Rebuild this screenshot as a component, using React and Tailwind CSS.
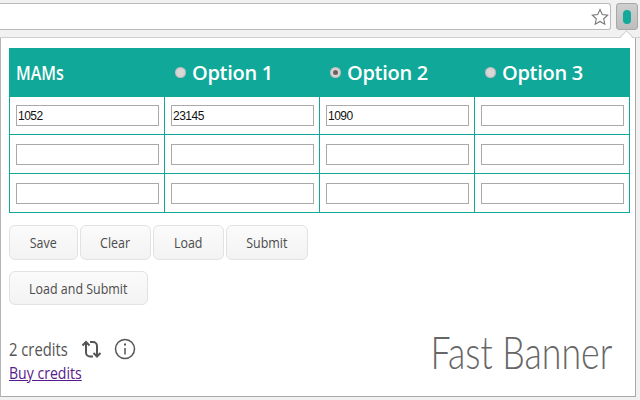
import React from 'react';

const rows = [
    ['1052', '23145', '1090', ''],
    ['', '', '', ''],
    ['', '', '', ''],
];

const headers = [
    { label: 'Option 1', checked: false },
    { label: 'Option 2', checked: true },
    { label: 'Option 3', checked: false },
];

const Radio = ({ checked }) => (
    <span className="flex h-[11px] w-[11px] shrink-0 items-center justify-center rounded-full bg-[#d8d8d8] shadow-[inset_0_0_2px_#8a8a8a]">
        {checked && <span className="h-[5px] w-[5px] rounded-full bg-[#6f5f62]" />}
    </span>
);

const Btn = ({ className, children }) => (
    <button className={`rounded-[6px] border border-[#e2e2e2] bg-gradient-to-b from-[#fbfbfb] to-[#f3f3f3] text-[15px] text-[#4c4c4c] ${className}`}>
        <span className="inline-block scale-x-[.83] whitespace-nowrap">{children}</span>
    </button>
);

const App = () => {
    return (
        <div className="relative h-[400px] w-[640px] overflow-hidden bg-[#f1f1f1] font-['Open_Sans',sans-serif]">
            {/* Browser toolbar */}
            <div className="flex h-[38px] items-start border-b border-[#cfcfcf] pt-[3px]">
                <div className="flex h-[27px] w-[611px] items-center justify-end rounded-r-[3px] border-y border-r border-[#b9b9b9] bg-white pr-[1px]">
                    <svg width="18" height="18" viewBox="0 0 18 18" fill="#fff" stroke="#777" strokeWidth="1.1">
                        <path d="M9 1.5l2.3 5 5.4.6-4 3.7 1.1 5.4L9 13.5l-4.800 2.700 1.100-5.400-4-3.700 5.400-.6z" />
                    </svg>
                </div>
                <div className="ml-[5px] flex h-[27px] w-[22px] items-center justify-center rounded-[3px] border border-[#a8a8a8] bg-gradient-to-b from-[#cfcfcf] to-[#bdbdbd]">
                    <span className="h-[14px] w-[8px] rounded-full bg-[#13a99b]" />
                </div>
            </div>
            <span className="absolute left-[622px] top-[32px] h-[9px] w-[9px] rotate-45 border-l border-t border-[#cfcfcf] bg-white" />

            {/* Popup */}
            <div className="relative ml-px h-[359px] w-[635px] border-b border-r border-[#a9a9a9] bg-white px-[8px] pt-[10px] shadow-[-1px_0_0_#b5b5b5]">
                <div className="w-[621px]">
                    <div className="grid h-[49px] grid-cols-[155px_155px_155px_156px] items-center bg-[#10a899] text-[20px] font-semibold text-white">
                        <div className="pl-[7px]">
                            <span className="inline-block origin-left scale-x-[.8]">MAMs</span>
                        </div>
                        {headers.map((h) => (
                            <div key={h.label} className="flex items-center gap-[6px] pl-[11px] tracking-[-0.3px]">
                                <Radio checked={h.checked} />
                                {h.label}
                            </div>
                        ))}
                    </div>
                    <div className="border-x border-b border-[#10a899]">
                        {rows.map((row, i) => (
                            <div key={i} className={`grid grid-cols-[155px_155px_155px_154px] ${i > 0 ? 'h-[39px] border-t border-[#10a899]' : 'h-[37px]'}`}>
                                {row.map((val, j) => (
                                    <div key={j} className={`flex items-center pl-[6px] ${j < 3 ? 'border-r border-[#10a899]' : ''}`}>
                                        <input
                                            readOnly
                                            value={val}
                                            className="h-[21px] w-[143px] border border-[#aaa] bg-white px-[1px] font-['Liberation_Sans',sans-serif] text-[12px] tracking-[-0.5px] text-[#111] outline-none"
                                        />
                                    </div>
                                ))}
                            </div>
                        ))}
                    </div>
                </div>

                <div className="mt-[12px] flex gap-[2px]">
                    <Btn className="h-[35px] w-[69px]">Save</Btn>
                    <Btn className="h-[35px] w-[71px]">Clear</Btn>
                    <Btn className="h-[35px] w-[71px]">Load</Btn>
                    <Btn className="h-[35px] w-[82px]">Submit</Btn>
                </div>
                <div className="mt-[11px]">
                    <Btn className="h-[34px] w-[139px]">Load and Submit</Btn>
                </div>

                <div className="mt-[30px] flex items-start justify-between">
                    <div>
                        <div className="flex h-[28px] items-center text-[18px] text-[#555]">
                            <span className="inline-block w-[59px] origin-left scale-x-[.82] whitespace-nowrap">2 credits</span>
                            <svg className="ml-[12px]" width="22" height="22" viewBox="0 0 22 22" fill="none" stroke="#555" strokeWidth="2">
                                <path d="M6 4v10.500a4 4 0 0 0 4 4h3" />
                                <path d="M2.500 7.500L6 4l3.500 3.500" />
                                <path d="M17 18.500V8a4 4 0 0 0-4-4h-3" />
                                <path d="M13.500 15L17 18.500l3.500-3.500" />
                            </svg>
                            <svg className="ml-[12px]" width="22" height="22" viewBox="0 0 22 22" fill="none" stroke="#555" strokeWidth="1.5">
                                <circle cx="11" cy="11" r="9.500" />
                                <path d="M11 10v6.500" />
                                <path d="M11 5.500v2" strokeWidth="2" />
                            </svg>
                        </div>
                        <a href="#" className="block origin-left scale-x-[.88] whitespace-nowrap text-[16px] leading-[20px] text-[#551a8b] underline">Buy credits</a>
                    </div>
                    <div className="mr-[15px] origin-right scale-x-[.776] whitespace-nowrap font-['Lato',sans-serif] text-[46px] font-light leading-[34px] text-[#666]">Fast Banner</div>
                </div>
            </div>
        </div>
    );
};

export default App;
